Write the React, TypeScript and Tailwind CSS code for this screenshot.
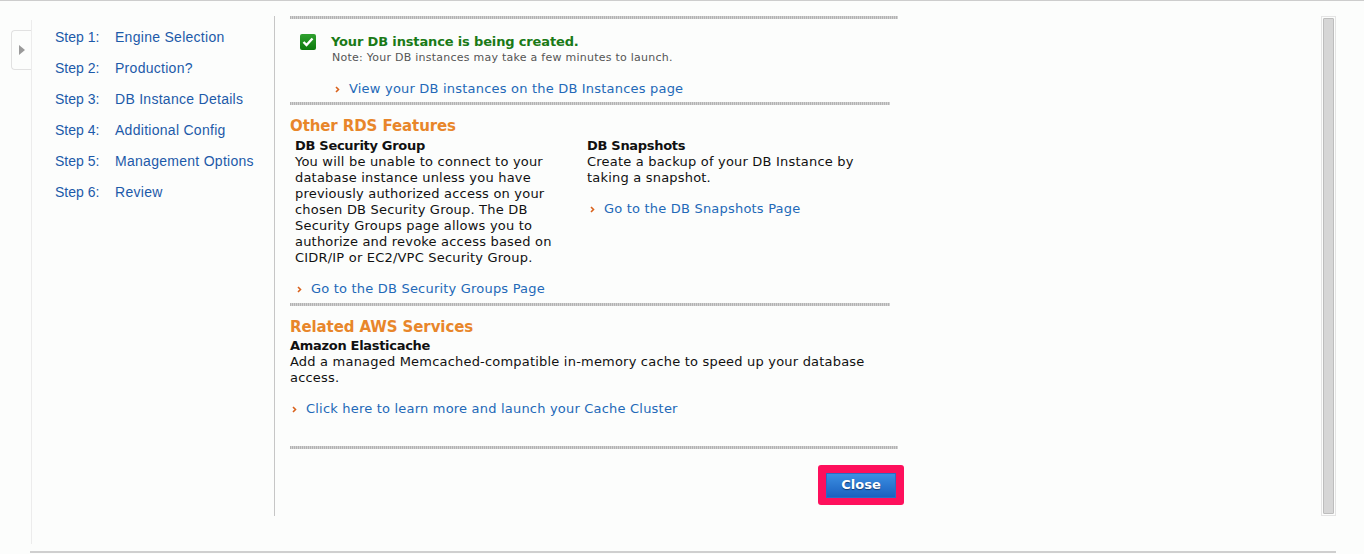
import React from "react";

const steps = [
  ["Step 1:", "Engine Selection"],
  ["Step 2:", "Production?"],
  ["Step 3:", "DB Instance Details"],
  ["Step 4:", "Additional Config"],
  ["Step 5:", "Management Options"],
  ["Step 6:", "Review"],
];

const Chevron = () => (
  <svg width="5" height="7" viewBox="0 0 5 7" className="shrink-0">
    <polyline points="1,1 3.5,3.5 1,6" fill="none" stroke="#d9621c" strokeWidth="1.6" />
  </svg>
);

const Rule = ({ w }: { w: string }) => (
  <div className={`${w} h-[3px] bg-[repeating-linear-gradient(90deg,#b3b3b3_0_1px,#d2d2d2_1px_2px)]`} />
);

const LinkRow = ({ text, className }: { text: string; className: string }) => (
  <div className={`flex items-center h-4 ${className}`}>
    <Chevron />
    <a className="text-[#2369b8] ml-[9px] leading-4 cursor-pointer">{text}</a>
  </div>
);

const App = () => {
  return (
    <div className="h-[554px] w-full bg-[#fcfdfc] border-t border-[#cdcdcd] overflow-hidden text-[13px] tracking-[0.2px] font-['DejaVu_Sans',Verdana,sans-serif] text-[#111]">
      <div className="flex h-[550px]">
        <div className="w-[11px]" />
        {/* collapse tab */}
        <div className="pt-[29px]">
          <div className="w-[20px] h-[40px] border border-r-0 border-[#e1e1e1] rounded-l-[4px] flex items-center justify-center bg-[#fcfdfc]">
            <svg width="6" height="10" viewBox="0 0 6 10">
              <polygon points="0,0 6,5 0,10" fill="#9a9a9a" />
            </svg>
          </div>
        </div>
        <div className="mt-[19px] h-[524px] border-l border-[#ececec]" />

        {/* steps */}
        <div className="w-[242px] pl-[23px] pt-[28px] font-['Liberation_Sans',Arial,sans-serif] text-[14px] tracking-[0.28px] text-[#1d5aa9]">
          <div className="flex flex-col gap-[15px]">
            {steps.map(([s, t]) => (
              <div key={s} className="flex leading-4">
                <span className="w-[60px] tracking-normal">{s}</span>
                <span>{t}</span>
              </div>
            ))}
          </div>
        </div>
        <div className="mt-[15px] h-[500px] w-px bg-[#c6c6c6]" />

        {/* main content */}
        <div className="pl-[15px] pt-[15px] w-[624px]">
          <Rule w="w-[608px]" />
          <div className="flex pl-[10px] pt-[15px]">
            <div className="w-4 h-4 rounded-[2px] bg-[linear-gradient(#2fa12f,#0c7a0c)] flex items-center justify-center">
              <svg width="12" height="10" viewBox="0 0 12 10">
                <polyline points="1.5,5 4.5,8 10.5,1.5" fill="none" stroke="white" strokeWidth="2.4" />
              </svg>
            </div>
            <div className="ml-[15px]">
              <div className="font-bold tracking-[-0.15px] text-[#1a7a17] leading-4">Your DB instance is being created.</div>
              <div className="text-[11px] tracking-[0.25px] text-[#555] leading-4 ml-px">Note: Your DB instances may take a few minutes to launch.</div>
            </div>
          </div>
          <LinkRow text="View your DB instances on the DB Instances page" className="mt-[15px] ml-[45px]" />
          <div className="mt-[5px]">
            <Rule w="w-[600px]" />
          </div>

          <div className="mt-[11px] text-[15px] font-bold tracking-[-0.1px] text-[#e8862a] leading-5">Other RDS Features</div>
          <div className="flex mt-[2px]">
            <div className="w-[297px] pl-[5px]">
              <div className="font-bold tracking-[-0.3px] leading-4">DB Security Group</div>
              <p className="leading-4 w-[262px]">
                You will be unable to connect to your database instance unless you have previously authorized access on your chosen DB Security Group. The DB Security Groups page allows you to authorize and revoke access based on CIDR/IP or EC2/VPC Security Group.
              </p>
              <LinkRow text="Go to the DB Security Groups Page" className="mt-[15px] ml-[2px]" />
            </div>
            <div className="w-[300px]">
              <div className="font-bold tracking-[-0.3px] leading-4">DB Snapshots</div>
              <p className="leading-4 w-[275px]">Create a backup of your DB Instance by taking a snapshot.</p>
              <LinkRow text="Go to the DB Snapshots Page" className="mt-[15px] ml-[3px]" />
            </div>
          </div>
          <div className="mt-[6px]">
            <Rule w="w-[600px]" />
          </div>

          <div className="mt-[11px] text-[15px] font-bold tracking-[-0.1px] text-[#e8862a] leading-5">Related AWS Services</div>
          <div className="mt-[1px] font-bold tracking-[-0.3px] leading-4">Amazon Elasticache</div>
          <p className="leading-4 w-[598px]">
            Add a managed Memcached-compatible in-memory cache to speed up your database access.
          </p>
          <LinkRow text="Click here to learn more and launch your Cache Cluster" className="mt-[15px] ml-[2px]" />
          <div className="mt-[29px]">
            <Rule w="w-[608px]" />
          </div>

          <div className="mt-[16px] ml-[528px] w-[86px] h-[40px] rounded-[3px] bg-[#fe105c] flex items-center justify-center">
            <button className="w-[70px] h-[25px] bg-[linear-gradient(#3b8fe2,#1b61bf)] text-white font-bold text-[13px] tracking-normal [text-shadow:0_1px_1px_#123a70] border border-[#2a6cc4]">
              Close
            </button>
          </div>
        </div>

        <div className="flex-1" />
        {/* scrollbar */}
        <div className="mt-[15px] h-[500px] w-[15px] border border-[#e4e4e4] p-px">
          <div className="h-full w-full bg-[#d6d6d6] border border-[#bdbdbd] rounded-[1px]" />
        </div>
        <div className="w-[28px]" />
      </div>
      <div className="ml-[30px] w-[1306px] border-t-2 border-[#cfcfcf]" />
    </div>
  );
};

export default App;
